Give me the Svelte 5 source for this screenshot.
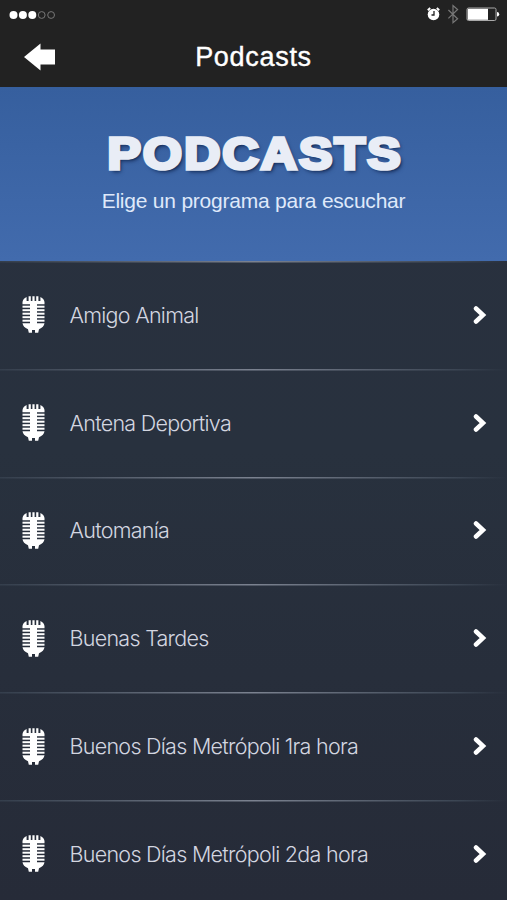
<script lang="ts">
  const programs: string[] = [
    "Amigo Animal",
    "Antena Deportiva",
    "Automanía",
    "Buenas Tardes",
    "Buenos Días Metrópoli 1ra hora",
    "Buenos Días Metrópoli 2da hora",
  ];
  const ribs = [9.7, 13.2, 16.7, 20.2, 23.7];
</script>

<div class="screen">
  <header>
    <div class="status">
      <svg class="signal" width="48" height="10" viewBox="0 0 48 10">
        {#each [0, 1, 2, 3, 4] as i}
          <circle class:empty={i > 2} cx={4.5 + i * 9.4} cy="5" r={i > 2 ? 3.4 : 4} />
        {/each}
      </svg>
      <svg width="80" height="20" viewBox="0 0 80 20">
        <g class="alarm">
          <circle cx="7.5" cy="10.5" r="5.8" />
          <path class="bell" d="M1.8 6.2l2.4-2.1M13.2 6.2l-2.4-2.1" />
          <path class="hands" d="M8 7v4H5.5" />
        </g>
        <path class="bluetooth" d="M22.4 6l9.2 8.8-4.6 3.9V1.5l4.6 4-9.2 8.9" />
        <rect class="shell" x="41" y="4" width="29" height="12.5" rx="1.5" />
        <rect class="charge" x="41.8" y="4.8" width="20.2" height="11" />
        <path class="charge" d="M71 8q2.2 0 2.2 2.3T71 12.6z" />
      </svg>
    </div>
    <div class="nav">
      <svg width="32" height="28" viewBox="0 0 32 28">
        <path class="back" d="M0 14L16.5.5V6.5H31V21.5H16.5V27.5z" />
      </svg>
      <h1>Podcasts</h1>
    </div>
  </header>

  <section class="banner">
    <h2>PODCASTS</h2>
    <p>Elige un programa para escuchar</p>
  </section>

  <ul>
    {#each programs as program}
      <li>
        <svg class="mic" width="23" height="37" viewBox="0 0 23 37">
          <path d="M8 5h7v24H8z" />
          <path d="M.5 8.2V6Q1 2.5 4.6 1V5H6.600V.2H8.800V5H10.400V.2H12.600V5H14.200V.2H16.400V5H18.400V1Q22 2.500 22.500 6V8.200z" />
          {#each ribs as y}
            <path d="M.5 {y}h22v2h-22z" />
          {/each}
          <path d="M.5 27.200H22.500Q22 31 17 33.200L16.200 36.800H13V34H10V36.800H6.800L6 33.200Q1 31 .500 27.200z" />
        </svg>
        <span>{program}</span>
        <svg class="chevron" width="14" height="20" viewBox="0 0 14 20">
          <path d="M3 3.5l7 6.500-7 6.500" />
        </svg>
      </li>
    {/each}
  </ul>
</div>

<style>
  :global(body) {
    margin: 0;
    background: #262c39;
  }
  .screen {
    width: 507px;
    height: 900px;
    overflow: hidden;
    font-family: Inter, "Liberation Sans", sans-serif;
    background: linear-gradient(#29303e, #28313e 50%, #262b38);
  }
  header {
    height: 87px;
    background: #222;
  }
  .status {
    display: flex;
    justify-content: space-between;
    height: 28px;
    padding: 0 7px 0 9px;
    box-sizing: border-box;
  }
  .status svg {
    margin-top: 4px;
    margin-right: -6px;
  }
  .status .signal {
    margin-top: 10px;
  }
  .signal circle {
    fill: #fff;
  }
  .signal .empty {
    fill: none;
    stroke: #777;
  }
  .alarm circle,
  .charge,
  .back,
  .mic {
    fill: #fff;
  }
  .bell {
    fill: none;
    stroke: #fff;
    stroke-width: 2;
  }
  .hands {
    fill: none;
    stroke: #222;
    stroke-width: 1.3;
  }
  .bluetooth {
    fill: none;
    stroke: #777;
    stroke-width: 1.2;
  }
  .shell {
    fill: none;
    stroke: #aaa;
  }
  .nav {
    display: grid;
    grid-template-columns: 32px 1fr 32px;
    align-items: center;
    height: 58px;
    padding: 0 24px;
  }
  h1 {
    margin: 0;
    text-align: center;
    font: 27px/32px "Liberation Sans", sans-serif;
    letter-spacing: 0.7px;
    -webkit-text-stroke: 0.4px #fff;
    color: #fff;
  }
  .banner {
    height: 174px;
    padding-top: 37px;
    box-sizing: border-box;
    text-align: center;
    background: linear-gradient(#365f9e, #426bad);
  }
  h2 {
    margin: 0;
    padding-left: 3px;
    font: bold 45px/59px "Liberation Sans", sans-serif;
    letter-spacing: 2px;
    transform: scaleX(1.11);
    -webkit-text-stroke: 3.6px #e9edf6;
    color: #e9edf6;
    text-shadow: 2px 2px 2px #152c58, 2px 3px 4px #1b3463;
  }
  p {
    margin: 5px 0 0;
    font: 21px/26px "Liberation Sans", sans-serif;
    letter-spacing: -0.22px;
    color: #dfe9fa;
  }
  ul {
    margin: 0;
    padding: 0;
    list-style: none;
  }
  li {
    display: flex;
    align-items: center;
    height: 107.8px;
    padding: 0 20px 0 22px;
    box-sizing: border-box;
    background: linear-gradient(90deg, #343e4c, #7b8290 50%, #3b4553 90%, transparent) top / 100% 1.5px no-repeat;
  }
  li span {
    flex: 1;
    margin-left: 24.5px;
    font-size: 21.5px;
    font-weight: 300;
    letter-spacing: -0.72px;
    color: #d3d6e0;
    white-space: nowrap;
  }
  .chevron {
    fill: none;
    stroke: #fff;
    stroke-width: 4.5;
    stroke-linecap: round;
  }
</style>
